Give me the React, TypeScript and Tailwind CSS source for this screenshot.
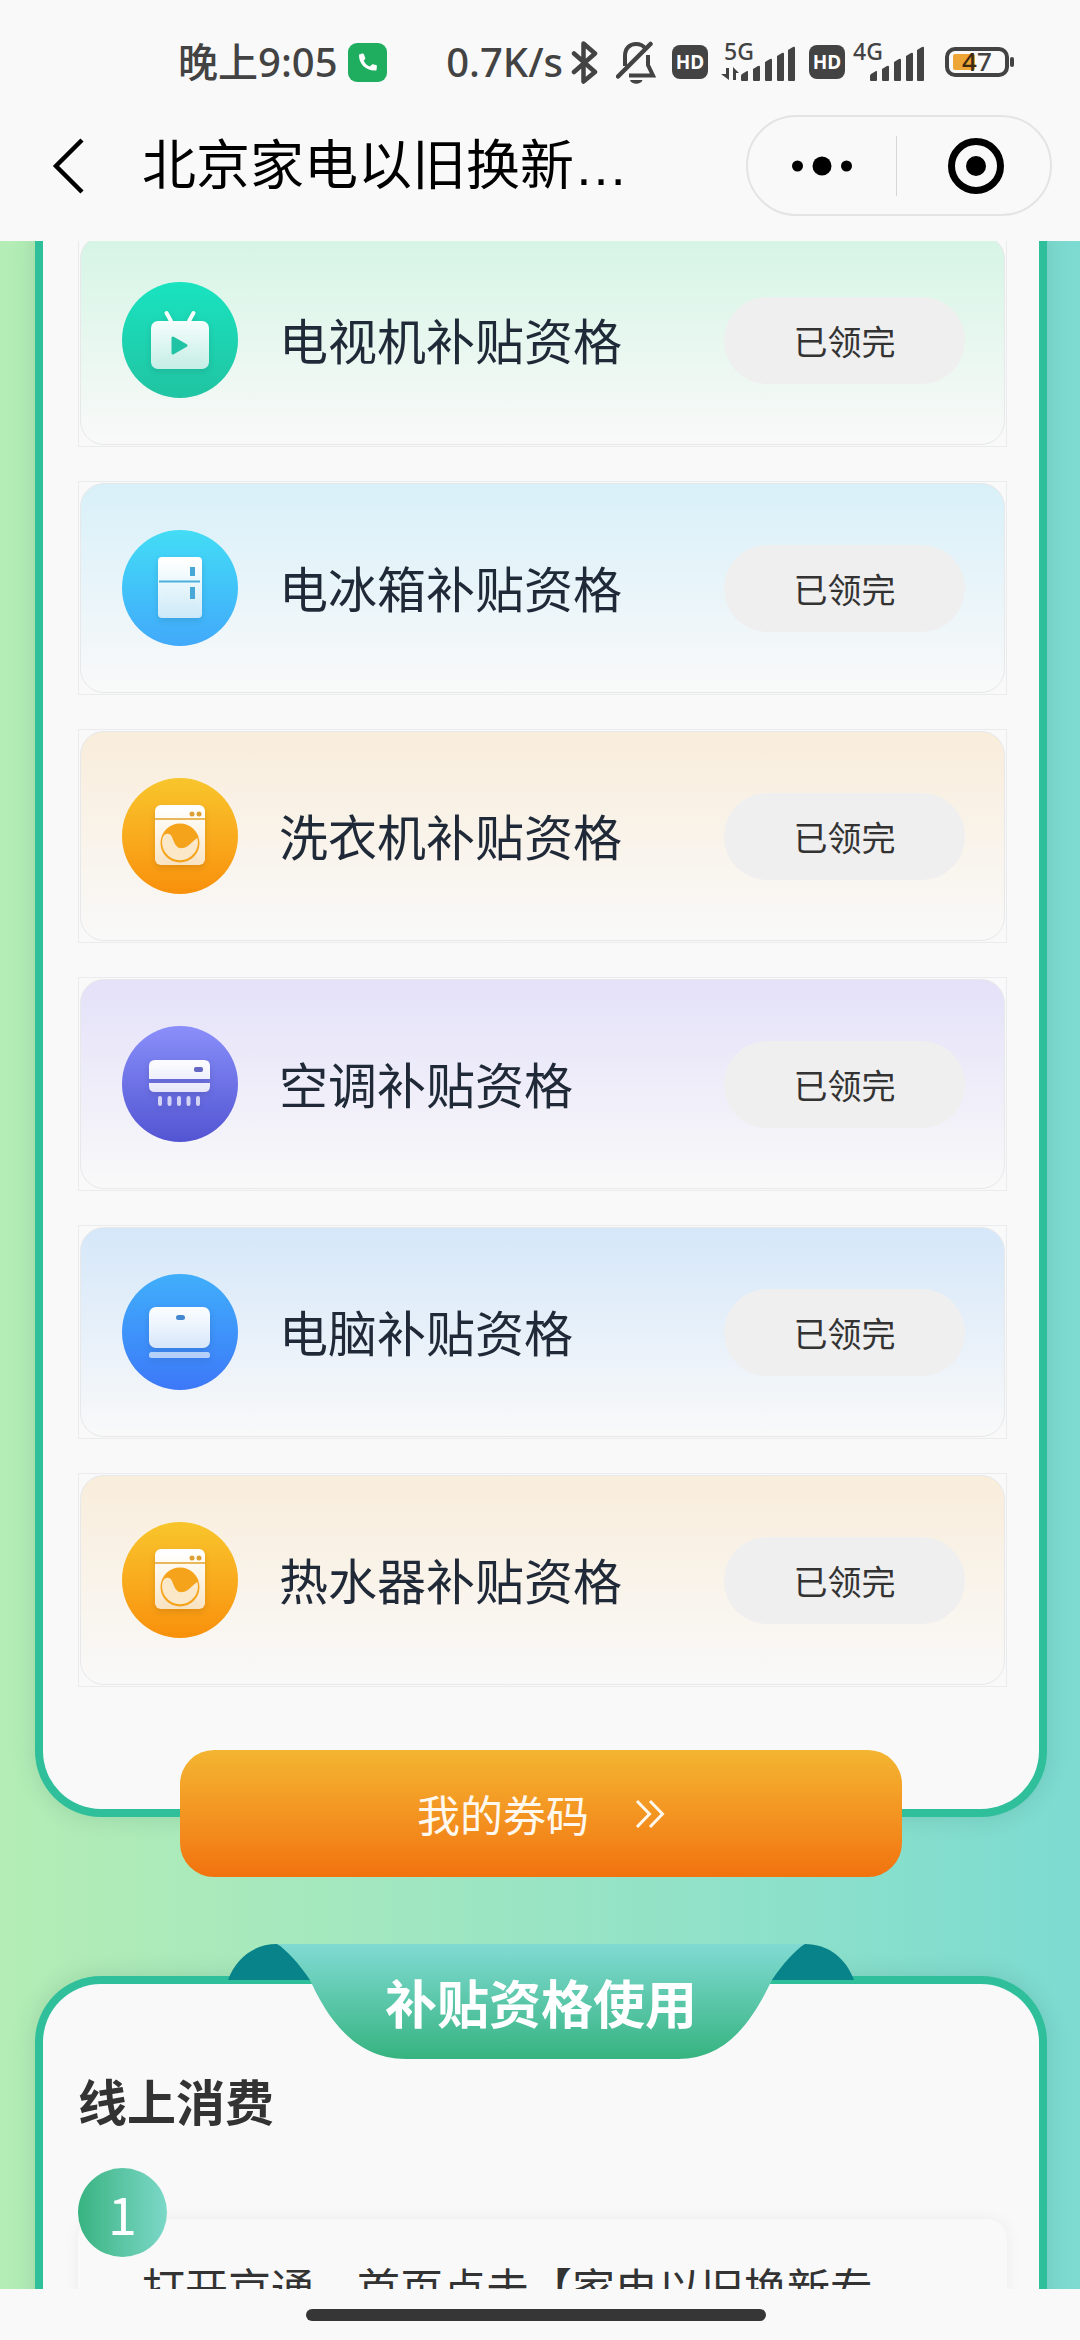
import React from 'react';

type IconKind = 'tv' | 'fridge' | 'washer' | 'aircon' | 'computer';

interface Subsidy {
  id: number;
  name: string;
  icon: IconKind;
  card: string;
  circle: string;
}

const subsidies: Subsidy[] = [
  {
    id: 1,
    name: '电视机补贴资格',
    icon: 'tv',
    card: 'from-[#d5f5e5] to-[#f9f9f9]',
    circle: 'from-[#19e3c0] to-[#20c4a2]',
  },
  {
    id: 2,
    name: '电冰箱补贴资格',
    icon: 'fridge',
    card: 'from-[#d8f0f9] to-[#f9f9f9]',
    circle: 'from-[#43dcf5] to-[#42a9fb]',
  },
  {
    id: 3,
    name: '洗衣机补贴资格',
    icon: 'washer',
    card: 'from-[#f9eddb] to-[#f9f9f9]',
    circle: 'from-[#f8c52c] to-[#f8900a]',
  },
  {
    id: 4,
    name: '空调补贴资格',
    icon: 'aircon',
    card: 'from-[#e4e1f9] to-[#f9f9f9]',
    circle: 'from-[#8a8ffa] to-[#5354d2]',
  },
  {
    id: 5,
    name: '电脑补贴资格',
    icon: 'computer',
    card: 'from-[#d5e7f9] to-[#f9f9f9]',
    circle: 'from-[#41aefb] to-[#3d78f8]',
  },
  {
    id: 6,
    name: '热水器补贴资格',
    icon: 'washer',
    card: 'from-[#f9eddb] to-[#f9f9f9]',
    circle: 'from-[#f8c52c] to-[#f8900a]',
  },
];

const App: React.FC = () => {
  return (
    <div className="flex h-screen flex-col overflow-hidden bg-[#f9f9f9] font-['Noto_Sans_CJK_SC',sans-serif] text-[#333]">
      <StatusBar />
      <NavBar />
      <main className="min-h-0 flex-1 overflow-y-auto bg-linear-to-r from-[#b4edb5] to-[#7cdbd1] pr-[33px] pl-[35px] [scrollbar-width:none]">
        <section className="-mt-2 rounded-b-[66px] border-x-8 border-b-8 border-[#2fbf9b] bg-[#f9f9f9] pr-8 pb-[122px] pl-[35px] shadow-[0_0_24px_rgba(0,60,50,0.14)]">
          <ul className="flex flex-col gap-[34px]">
            {subsidies.map((subsidy) => (
              <SubsidyCard key={subsidy.id} subsidy={subsidy} />
            ))}
          </ul>
        </section>

        <button
          type="button"
          className="relative mx-auto -mt-[67px] flex h-[127px] w-[722px] max-w-full items-center justify-center gap-[46px] rounded-[34px] bg-linear-to-b from-[#f3b531] to-[#f1720e] text-[43px] text-[#fff8ee]"
        >
          <span>我的券码</span>
          <svg width="30" height="30" viewBox="0 0 30 30" fill="none" stroke="currentColor" strokeWidth="3">
            <path d="M2 2l12.500 13L2 28M15 2l12.500 13L15 28" />
          </svg>
        </button>

        <UsageSection />
      </main>
      <footer className="flex h-[51px] shrink-0 items-center justify-center pr-2">
        <div className="h-3 w-[460px] rounded-full bg-[#363636]" />
      </footer>
    </div>
  );
};

const SubsidyCard: React.FC<{ subsidy: Subsidy }> = ({ subsidy }) => {
  return (
    <li className="h-[214px] border border-[#e9ebec] p-px">
      <div
        className={`flex h-full items-center rounded-3xl border border-[#e6e8ea] bg-linear-to-b pr-[39px] pl-[41px] ${subsidy.card}`}
      >
        <div className={`h-[116px] w-[116px] shrink-0 rounded-full bg-linear-to-b ${subsidy.circle}`}>
          <ApplianceIcon kind={subsidy.icon} />
        </div>
        <h3 className="ml-[41px] flex-1 pb-0.5 text-[49px] leading-[72px] text-[#1f2937]">{subsidy.name}</h3>
        <button type="button" disabled className="h-[87px] w-[241px] rounded-full bg-[#efefef] text-[34px] text-[#333]">
          已领完
        </button>
      </div>
    </li>
  );
};

const UsageSection: React.FC = () => {
  return (
    <section className="relative mt-[99px] rounded-t-[66px] border-x-8 border-t-8 border-[#2fbf9b] bg-[#f9f9f9] pt-[86px] pr-8 pb-40 pl-[35px] shadow-[0_0_24px_rgba(0,60,50,0.14)]">
      {/* ribbon hanging over the top edge of the panel */}
      <div className="absolute inset-x-0 -top-10 flex justify-center">
        <svg width="626" height="115" viewBox="0 0 626 115">
          <defs>
            <linearGradient id="ribbon" x1="0" y1="0" x2="0" y2="1">
              <stop offset="0" stopColor="#80dbd3" />
              <stop offset="1" stopColor="#36b380" />
            </linearGradient>
          </defs>
          <path d="M0 36C8 14 26 0 49 0h8l36 36zM626 36C618 14 600 0 577 0h-8l-36 36z" fill="#08838a" />
          <path
            d="M49 0C58 5 72 21 82 36C96 66 122 115 178 115H450C504 115 528 68 544 36C554 21 568 5 577 0Z"
            fill="url(#ribbon)"
          />
        </svg>
        <h2 className="absolute top-[22px] text-[52px] leading-[72px] font-bold text-white">补贴资格使用</h2>
      </div>

      <h3 className="text-[49px] leading-[60px] font-bold">线上消费</h3>
      <div className="relative mt-[89px] rounded-[20px] px-16 pt-9 pb-24 shadow-[0_0_16px_rgba(0,0,0,0.06)]">
        <span className="absolute -top-[51px] left-0 flex h-[89px] w-[89px] items-center justify-center rounded-full bg-linear-to-r from-[#37b381] to-[#7bd8c8] text-[52px] text-white">
          1
        </span>
        <p className="text-[43px] leading-[62px]">打开京通，首页点击【家电以旧换新专</p>
      </div>
    </section>
  );
};

const NavBar: React.FC = () => {
  return (
    <header className="flex h-[151px] shrink-0 items-center pr-7 pl-[50px] text-black">
      <button type="button" aria-label="返回" className="mr-[54px]">
        <svg width="38" height="56" viewBox="0 0 38 56" fill="none" stroke="currentColor" strokeWidth="4.500">
          <path d="M32 2L6 28L32 54" />
        </svg>
      </button>
      <h1 className="flex-1 pb-1 text-[54px] leading-[80px]">
        北京家电以旧换新<span className="font-['Liberation_Sans',sans-serif]">…</span>
      </h1>
      <div className="flex h-[101px] w-[306px] items-center rounded-full border-2 border-[#e4e4e4]">
        <button type="button" aria-label="更多" className="flex flex-1 justify-center">
          <svg width="60" height="20" viewBox="0 0 60 20" fill="currentColor">
            <circle cx="5.500" cy="10" r="5.500" />
            <circle cx="30" cy="10" r="9.500" />
            <circle cx="54.500" cy="10" r="5.500" />
          </svg>
        </button>
        <div className="h-[60px] w-px bg-[#d6d6d6]" />
        <button type="button" aria-label="关闭" className="flex flex-1 justify-center pl-1.5">
          <svg width="56" height="56" viewBox="0 0 56 56">
            <circle cx="28" cy="28" r="24.500" fill="none" stroke="currentColor" strokeWidth="7" />
            <circle cx="28" cy="28" r="10" fill="currentColor" />
          </svg>
        </button>
      </div>
    </header>
  );
};

const StatusBar: React.FC = () => {
  return (
    <div className="flex h-[90px] shrink-0 items-center justify-between pt-[34px] pr-[65px] pl-[178px] font-['Noto_Sans','Noto_Sans_CJK_SC',sans-serif] text-[40px] font-medium text-[#434343]">
      <div className="flex items-center gap-2.5">
        <span>晚上9:05</span>
        <svg width="39" height="39" viewBox="0 0 39 39">
          <rect width="39" height="39" rx="9" fill="#1fae60" />
          <path
            d="M11 11.500l3.500-1c1 0 1.400.6 1.700 1.500l1 3c.2.900-.2 1.500-1.600 2.500c1.400 3 3.200 4.800 6.200 6l2-1.700c.6-.5 1-.6 1.800-.4l2.400.7c.8.300 1 .8.900 1.600l-.5 3.800C18.500 28.500 10.500 21 11 11.500z"
            fill="#fff"
          />
        </svg>
      </div>
      <div className="flex items-center">
        <span>0.7K/s</span>
        <svg className="ml-2" width="27" height="43" viewBox="0 0 27 43" fill="none" stroke="currentColor" strokeWidth="4.500" strokeLinecap="round" strokeLinejoin="round">
          <path d="M3 12.500L24 31L12.500 40.500V2.500L24 12.500L3 31" />
        </svg>
        <svg className="ml-[18px]" width="41" height="43" viewBox="0 0 41 43" fill="none" stroke="currentColor" strokeWidth="4">
          <path d="M9 25V15C9 7 14 3 20 3c4 0 7 1.500 9 4M32 14v10l5 10.500H13" />
          <path d="M34.500 3L2 35.500" strokeWidth="4.500" strokeLinecap="round" />
          <path d="M14 39h12.500c-1.500 5-11 5-12.500 0z" fill="currentColor" stroke="none" />
        </svg>
        <HdBadge className="ml-[15px]" />
        <svg className="ml-[13px] overflow-visible" width="75" height="40" viewBox="0 0 75 40" fill="currentColor">
          <text x="3" y="18" fontSize="23" fontWeight="500">
            5G
          </text>
          <path d="M5 26h3v12l-8-6h5zM12 38V25l6 6h-3v7z" />
          <SignalBars x={20} />
        </svg>
        <HdBadge className="ml-[13px]" />
        <svg className="ml-[7px] overflow-visible" width="73" height="40" viewBox="0 0 73 40" fill="currentColor">
          <text x="1" y="18" fontSize="23" fontWeight="500">
            4G
          </text>
          <SignalBars x={18} />
        </svg>
        <svg className="ml-5 overflow-visible" width="70" height="30" viewBox="0 0 70 30" fill="currentColor">
          <rect x="2" y="2" width="60" height="26" rx="8" fill="none" stroke="currentColor" strokeWidth="4" />
          <rect x="8" y="7" width="22" height="16" rx="2" fill="#eda535" />
          <rect x="65" y="10" width="4" height="10" rx="2" />
          <text x="17" y="24" fontSize="26" fontWeight="500" fill="#3d2a10">
            4<tspan fill="#434343">7</tspan>
          </text>
        </svg>
      </div>
    </div>
  );
};

const HdBadge: React.FC<{ className: string }> = ({ className }) => {
  return (
    <span
      className={`flex h-[34px] w-9 items-center justify-center rounded-lg bg-[#434343] text-[19px] leading-7 font-bold text-white ${className}`}
    >
      HD
    </span>
  );
};

const SignalBars: React.FC<{ x: number }> = ({ x }) => {
  return (
    <g transform={`translate(${x} 0)`}>
      <path d="M0 38v-4q0-1 1-2l5-3q1-.5 1 1v8q0 1-1 1H1q-1 0-1-1z" />
      <path d="M12 38V27l5-3q2-1 2 1v13q0 1-1 1h-5q-1 0-1-1z" />
      <path d="M24 38V20l5-3q2-1 2 1v20q0 1-1 1h-5q-1 0-1-1z" />
      <path d="M36 38V14l5-3q2-1 2 1v26q0 1-1 1h-5q-1 0-1-1z" />
      <path d="M47 38V8l5-3q2-1 2 1v32q0 1-1 1h-5q-1 0-1-1z" />
    </g>
  );
};

const ApplianceIcon: React.FC<{ kind: IconKind }> = ({ kind }) => {
  return (
    <svg viewBox="0 0 116 116" className="h-full w-full drop-shadow-[0_3px_3px_rgba(0,0,0,0.12)]">
      <defs>
        <linearGradient id="glyph" gradientUnits="userSpaceOnUse" x1="0" y1="30" x2="0" y2="88">
          <stop offset="0" stopColor="#fff" />
          <stop offset="1" stopColor="#fff" stopOpacity="0.740" />
        </linearGradient>
      </defs>
      {kind === 'tv' && (
        <>
          <path d="M44.500 31l4.500 8M71.500 31L67 39" stroke="#f4fffc" strokeWidth="4" strokeLinecap="round" />
          <rect x="29" y="39" width="58" height="48" rx="7" fill="url(#glyph)" />
          <path d="M51 56v15l13-7.500z" fill="#20c4a4" stroke="#20c4a4" strokeWidth="3" strokeLinejoin="round" />
        </>
      )}
      {kind === 'fridge' && (
        <>
          <rect x="36" y="27" width="44" height="61" rx="4" fill="url(#glyph)" />
          <path d="M37 51.500h41" stroke="#4bb1dc" strokeWidth="2" />
          <path d="M68 37h5v9h-5zM68 57h5v12h-5z" fill="#47a8d8" />
        </>
      )}
      {kind === 'washer' && (
        <>
          <rect x="33" y="27" width="50" height="60" rx="6" fill="url(#glyph)" />
          <path d="M32 41h52" stroke="#e2a22a" strokeWidth="1.500" />
          <circle cx="70" cy="36" r="2.500" fill="#dba036" />
          <circle cx="77" cy="36" r="2.500" fill="#dba036" />
          <circle cx="58" cy="65" r="19.500" fill="#f5a31b" />
          <path
            d="M40.500 60C42 55 48 54 50 59C53 67 55 71 61 70C67 69 70 63 75.500 60A18 18 0 1 1 40.500 60z"
            fill="#fbe8c9"
          />
        </>
      )}
      {kind === 'aircon' && (
        <>
          <path d="M33 34h49q6 0 6 6v13H27V40q0-6 6-6z" fill="url(#glyph)" />
          <path d="M27 57h61v3q0 6-6 6H33q-6 0-6-6z" fill="url(#glyph)" />
          <rect x="72" y="41" width="9" height="5" rx="2" fill="#6466c4" />
          <path
            d="M38 72v6M47.500 72v6M57 72v6M66.500 72v6M76 72v6"
            stroke="#fff"
            strokeOpacity="0.720"
            strokeWidth="4"
            strokeLinecap="round"
          />
        </>
      )}
      {kind === 'computer' && (
        <>
          <rect x="27" y="33" width="61" height="41" rx="7" fill="url(#glyph)" />
          <rect x="54" y="41" width="9" height="5" rx="2.500" fill="#4387d0" />
          <rect x="27" y="78" width="61" height="6" rx="2.500" fill="#fff" fillOpacity="0.620" />
        </>
      )}
    </svg>
  );
};

export default App;
